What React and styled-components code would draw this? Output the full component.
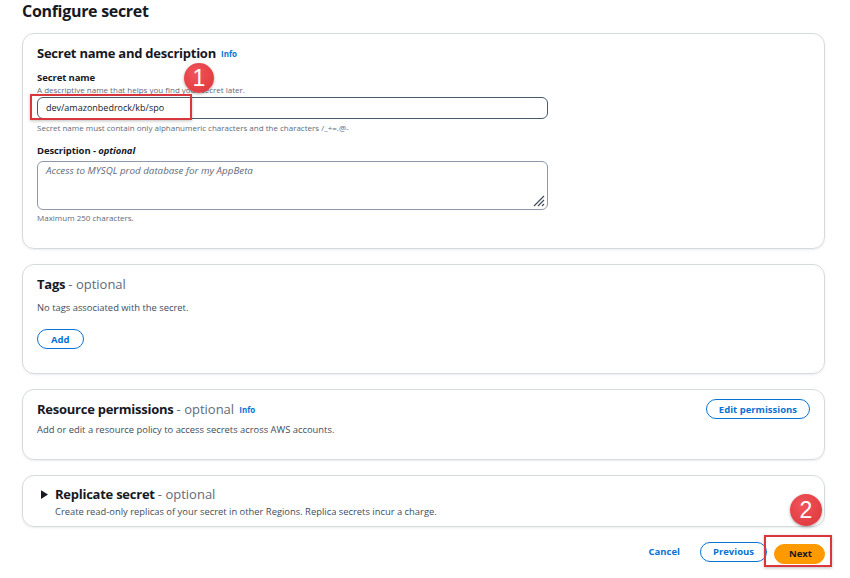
import styled, { createGlobalStyle } from 'styled-components';

const GlobalStyle = createGlobalStyle`
  body {
    margin: 0;
    background: #ffffff;
    font-family: "Open Sans", "Noto Sans", sans-serif;
    color: #16191f;
  }
`;

const App = () => {
  return (
    <Page>
      <GlobalStyle />
      <PageTitle>Configure secret</PageTitle>

      <Card $height={216}>
        <CardTitle>
          Secret name and description <Info>Info</Info>
        </CardTitle>
        <Field $top={7}>
          <Label>Secret name</Label>
          <Hint>A descriptive name that helps you find your secret later.</Hint>
          <Marked $top={2}>
            <TextInput>dev/amazonbedrock/kb/spo</TextInput>
            <Highlight $left={-7} $top={-3} $width={162} $height={26} />
            <Badge $left={147} $top={-34}>1</Badge>
          </Marked>
          <Hint $gap={3}>Secret name must contain only alphanumeric characters and the characters /_+=.@-</Hint>
        </Field>
        <Field $top={11}>
          <Label>
            Description - <em>optional</em>
          </Label>
          <TextArea>
            Access to MYSQL prod database for my AppBeta
            <Grip viewBox="0 0 14 14">
              <path d="M13 3 L3 13 M13 7 L7 13 M13 11 L11 13" stroke="#414d5c" strokeWidth="1.2" fill="none" />
            </Grip>
          </TextArea>
          <Hint $gap={2}>Maximum 250 characters.</Hint>
        </Field>
      </Card>

      <Card $height={110}>
        <CardTitle>
          Tags <Optional>- optional</Optional>
        </CardTitle>
        <Body $gap={8}>No tags associated with the secret.</Body>
        <Actions $top={15}>
          <Button>Add</Button>
        </Actions>
      </Card>

      <Card $height={71}>
        <HeaderRow>
          <div>
            <CardTitle>
              Resource permissions <Optional>- optional</Optional> <Info>Info</Info>
            </CardTitle>
            <Body>Add or edit a resource policy to access secrets across AWS accounts.</Body>
          </div>
          <Button $wide>Edit permissions</Button>
        </HeaderRow>
      </Card>

      <Card $height={52} $compact>
        <Expander>
          <Caret viewBox="0 0 8 10">
            <path d="M0 0 L8 5 L0 10 Z" fill="#16191f" />
          </Caret>
          <div>
            <CardTitle $tight>
              Replicate secret <Optional>- optional</Optional>
            </CardTitle>
            <Body $gap={3}>Create read-only replicas of your secret in other Regions. Replica secrets incur a charge.</Body>
          </div>
        </Expander>
      </Card>

      <Footer>
        <LinkButton>Cancel</LinkButton>
        <Button $pad={12}>Previous</Button>
        <Marked>
          <PrimaryButton>Next</PrimaryButton>
          <Highlight $left={-10} $top={-5} $width={68} $height={32} />
          <Badge $left={16} $top={-46} $size={32}>2</Badge>
        </Marked>
      </Footer>
    </Page>
  );
};

export default App;

const Page = styled.div`
  width: 850px;
  height: 578px;
  padding: 0 25px 0 22px;
  box-sizing: border-box;
  display: flex;
  flex-direction: column;
  gap: 15px;
  overflow: hidden;
`;

const PageTitle = styled.h1`
  margin: 0;
  height: 18px;
  font-size: 16px;
  line-height: 22px;
  font-weight: 700;
  letter-spacing: -0.3px;
  color: #16191f;
`;

const Card = styled.section`
  height: ${p => p.$height}px;
  box-sizing: border-box;
  border: 1px solid #d5dbdb;
  border-radius: 12px;
  padding: ${p => (p.$compact ? '9px 15px' : '9px 14px')};
  box-shadow: 0 1px 2px rgba(0, 22, 40, 0.08);
  flex-shrink: 0;
`;

const CardTitle = styled.h2`
  margin: 0;
  font-size: 13px;
  line-height: ${p => (p.$tight ? '18px' : '20px')};
  font-weight: 700;
  letter-spacing: -0.25px;
  color: #16191f;
`;

const Optional = styled.span`
  font-weight: 400;
  letter-spacing: 0;
  color: #5f6b7a;
`;

const Info = styled.span`
  font-size: 8px;
  font-weight: 700;
  letter-spacing: 0;
  color: #0972d3;
  margin-left: 2px;
  vertical-align: 1px;
`;

const Field = styled.div`
  margin-top: ${p => p.$top ?? 6}px;
  display: flex;
  flex-direction: column;
`;

const Label = styled.div`
  font-size: 9.5px;
  line-height: 13px;
  font-weight: 700;
  letter-spacing: -0.1px;
  color: #16191f;

  em {
    font-style: italic;
  }
`;

const Hint = styled.div`
  font-size: 8px;
  line-height: 11px;
  color: #5f6b7a;
  margin-top: ${p => p.$gap ?? 0}px;
`;

const Marked = styled.div`
  position: relative;
  margin-top: ${p => p.$top ?? 0}px;
`;

const TextInput = styled.div`
  width: 511px;
  height: 22px;
  box-sizing: border-box;
  border: 1px solid #4b5a6b;
  border-radius: 6px;
  padding: 0 8px;
  font-size: 9px;
  line-height: 20px;
  color: #16191f;
`;

const TextArea = styled.div`
  position: relative;
  width: 511px;
  height: 49px;
  box-sizing: border-box;
  border: 1px solid #8d99a8;
  border-radius: 6px;
  padding: 2px 8px;
  font-size: 9.8px;
  line-height: 14px;
  font-style: italic;
  color: #5f6b7a;
  margin-top: 4px;
`;

const Grip = styled.svg`
  position: absolute;
  right: 2px;
  bottom: 2px;
  width: 14px;
  height: 14px;
`;

const Highlight = styled.div`
  position: absolute;
  left: ${p => p.$left}px;
  top: ${p => p.$top}px;
  width: ${p => p.$width}px;
  height: ${p => p.$height}px;
  box-sizing: border-box;
  border: 2px solid #d9363e;
  box-shadow: 0 1px 3px rgba(0, 0, 0, 0.25);
  pointer-events: none;
`;

const Badge = styled.div`
  position: absolute;
  left: ${p => p.$left}px;
  top: ${p => p.$top}px;
  width: ${p => p.$size ?? 30}px;
  height: ${p => p.$size ?? 30}px;
  border-radius: 50%;
  background: radial-gradient(circle at 40% 35%, #f0555a, #dc3439);
  color: #ffffff;
  font-family: "Liberation Sans", Arial, sans-serif;
  font-size: 23px;
  line-height: ${p => p.$size ?? 30}px;
  text-align: center;
  box-shadow: 0 1px 3px rgba(0, 0, 0, 0.35);
`;

const Body = styled.p`
  margin: ${p => p.$gap ?? 4}px 0 0;
  font-size: 9.4px;
  line-height: 12px;
  color: #414d5c;
`;

const Actions = styled.div`
  margin-top: ${p => p.$top}px;
  display: flex;
`;

const Button = styled.button`
  height: 20px;
  box-sizing: border-box;
  padding: 0 ${p => (p.$wide ? 12 : p.$pad ?? 13)}px;
  border: 1.5px solid #0972d3;
  border-radius: 10px;
  background: #ffffff;
  color: #0972d3;
  font-family: inherit;
  font-size: 9.5px;
  font-weight: 700;
  line-height: 17px;
  cursor: pointer;
`;

const PrimaryButton = styled(Button)`
  background: #ff9900;
  border-color: #ff9900;
  color: #16191f;
  padding: 0 14px;
  width: 51px;
`;

const LinkButton = styled.button`
  border: none;
  background: none;
  padding: 0;
  color: #0972d3;
  font-family: inherit;
  font-size: 9.5px;
  font-weight: 700;
  margin-right: 13px;
`;

const HeaderRow = styled.div`
  display: flex;
  justify-content: space-between;
  align-items: flex-start;
`;

const Expander = styled.div`
  display: flex;
  gap: 7px;
  align-items: flex-start;
  padding-left: 3px;
`;

const Caret = styled.svg`
  width: 7px;
  height: 9px;
  margin-top: 5px;
`;

const Footer = styled.div`
  display: flex;
  justify-content: flex-end;
  align-items: center;
  gap: 7px;
  margin-top: -2px;
`;
